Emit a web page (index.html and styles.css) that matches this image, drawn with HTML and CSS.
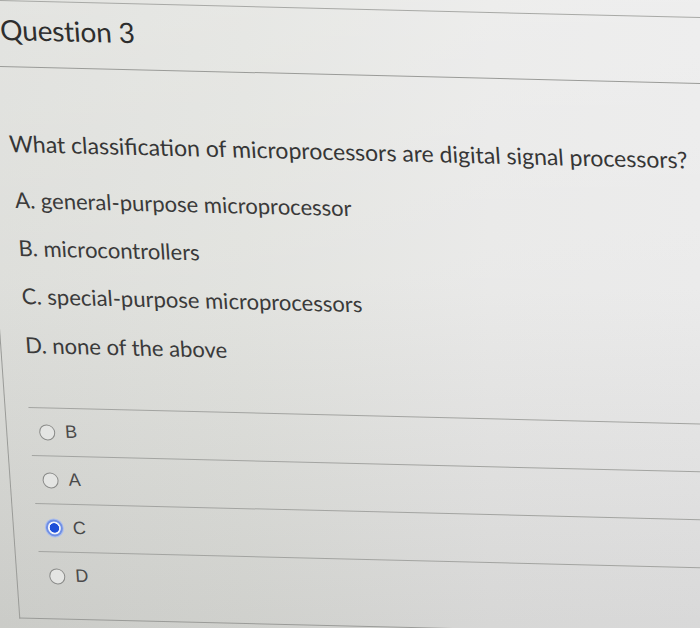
FILE: index.html
```html
<!DOCTYPE html>
<html lang="en">
<head>
<meta charset="utf-8">
<title>Question 3</title>
<link rel="stylesheet" href="styles.css">
</head>
<body>
<div class="page">
  <div class="question">
    <div class="header">
      <h2 class="title">Question 3</h2>
    </div>
    <div class="text">
      <p class="prompt">What classification of microprocessors are digital signal processors?</p>
      <p class="opt first">A. general-purpose microprocessor</p>
      <p class="opt">B. microcontrollers</p>
      <p class="opt">C. special-purpose microprocessors</p>
      <p class="opt">D. none of the above</p>
    </div>
    <div class="answers">
      <label class="answer"><span class="radio"></span><span class="label">B</span></label>
      <label class="answer"><span class="radio"></span><span class="label">A</span></label>
      <label class="answer"><span class="radio checked"></span><span class="label">C</span></label>
      <label class="answer"><span class="radio"></span><span class="label">D</span></label>
    </div>
  </div>
</div>
</body>
</html>
```
FILE: styles.css
```css
html, body {
  margin: 0;
  padding: 0;
  height: 100%;
  overflow: hidden;
}
body {
  background:
    linear-gradient(180deg, rgba(255,255,255,0.25) 0%, rgba(255,255,255,0.1) 45%, rgba(0,0,0,0.07) 100%),
    linear-gradient(90deg, #dadbd7 0%, #dfe0dc 35%, #e7e7e6 70%, #e9e9e9 100%);
  font-family: Lato, "Open Sans", sans-serif;
  color: #353535;
}
.page {
  width: 700px;
  height: 628px;
  transform-origin: 0 0;
  transform: skew(4deg, 1.4deg);
}
.question {
  margin-left: -24px;
  width: 728px;
  border: 1px solid #9a9b98;
  border-top-color: #a8a9a6;
  box-sizing: border-box;
  height: 619px;
}
.header {
  height: 65px;
  border-bottom: 1px solid #9a9b98;
  box-sizing: content-box;
  padding-left: 21px;
}
.title {
  margin: 0;
  font-size: 28px;
  font-weight: 400;
  line-height: 1;
  padding-top: 14px;
  color: #2e2e2e;
  letter-spacing: -0.2px;
}
.text {
  padding-left: 22px;
  padding-top: 61px;
}
.prompt {
  margin: 0;
  font-size: 23px;
  line-height: 30px;
  color: #363636;
  white-space: nowrap;
}
.opt {
  margin: 18px 0 0 2px;
  font-size: 22px;
  line-height: 30px;
  color: #3a3a3a;
}
.opt.first {
  margin-top: 27px;
}
.opt:nth-child(5) {
  margin-top: 19px;
}
.answers {
  margin-left: 23px;
  margin-top: 47px;
}
.answer {
  display: flex;
  align-items: center;
  height: 48px;
  border-top: 1px solid #a3a4a1;
  padding-left: 9px;
  box-sizing: border-box;
}
.radio {
  width: 14px;
  height: 14px;
  border: 1.5px solid #8a8b89;
  border-radius: 50%;
  background: #e4e5e3;
  flex: none;
}
.radio.checked {
  width: 13px;
  height: 13px;
  border: 2px solid #6f8fe6;
  background: radial-gradient(circle, #1f4fd8 0, #1f4fd8 4.4px, #f2f4fb 5px);
  box-shadow: 0 0 0 1px #a9bdf0;
}
.label {
  margin-left: 10px;
  font-family: "Liberation Sans", Arial, sans-serif;
  font-size: 18px;
  color: #4a4a4a;
}
```
